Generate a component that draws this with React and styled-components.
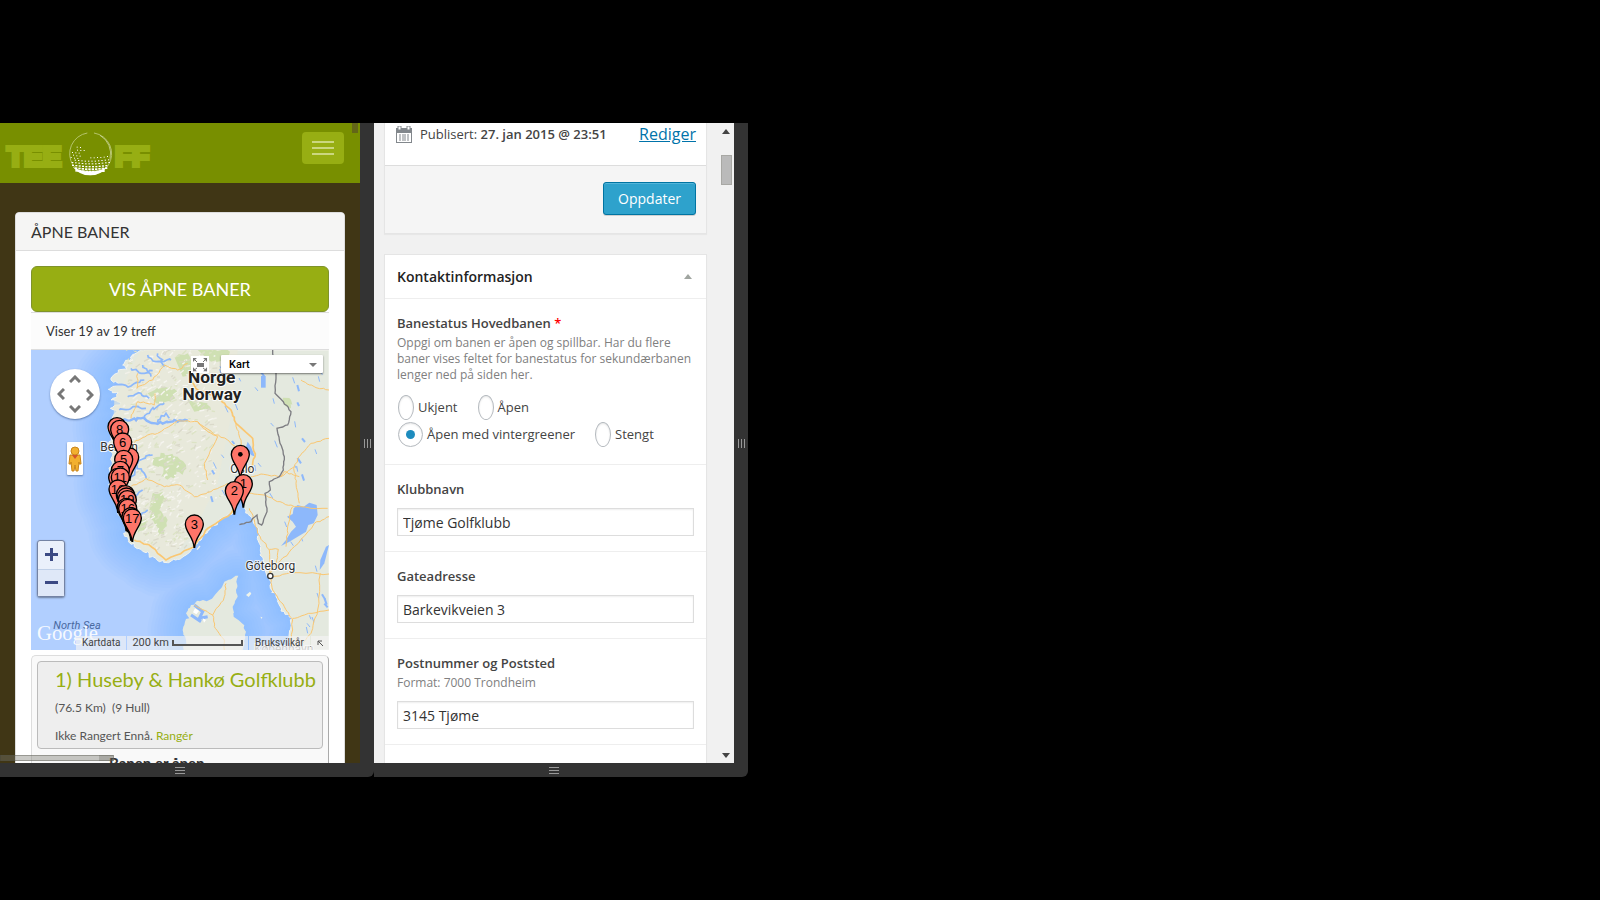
import React from "react";
import styled, { createGlobalStyle, css } from "styled-components";

const GlobalStyle = createGlobalStyle`
  *, *::before, *::after { box-sizing: border-box; }
  body { margin: 0; background: #000; }
  h1, h2, h3, p, fieldset { margin: 0; padding: 0; border: 0; }
  button, input, select { font: inherit; margin: 0; }
`;

const lato = `Lato, "Liberation Sans", sans-serif`;
const openSans = `"Open Sans", "Liberation Sans", sans-serif`;

/* ---------- device frames ---------- */

const Stage = styled.main`
  display: grid;
  grid-template-columns: repeat(2, minmax(320px, 374px));
  align-content: center;
  min-height: 100vh;
`;

const Device = styled.section`
  display: grid;
  grid-template-columns: minmax(0, 1fr) 14px;
  grid-template-rows: 640px 14px;
  background: #333;
  border-bottom-right-radius: 6px;
`;

const Grip = styled.div`
  display: flex;
  align-items: center;
  justify-content: center;
  gap: 2px;
  flex-direction: ${(p) => (p.$rows ? "column" : "row")};
  span {
    background: #999;
    width: ${(p) => (p.$rows ? "10px" : "1px")};
    height: ${(p) => (p.$rows ? "1px" : "9px")};
  }
`;

const DragGrip = ({ rows }) => (
  <Grip $rows={rows}>
    <span />
    <span />
    <span />
  </Grip>
);

/* ---------- golf site ---------- */

const GolfScreen = styled.div`
  position: relative;
  overflow: hidden;
  background: #403615;
  font-family: ${lato};
  color: #333;
`;

const TopBar = styled.header`
  display: flex;
  justify-content: space-between;
  align-items: flex-start;
  height: 60px;
  padding: 9px 16px 0 5px;
  background: #788f00;
`;

const MenuButton = styled.button`
  display: flex;
  flex-direction: column;
  align-items: center;
  justify-content: center;
  gap: 4px;
  width: 42px;
  height: 32px;
  padding: 0;
  border: 0;
  border-radius: 4px;
  background: #97ae13;
  span {
    width: 22px;
    height: 2px;
    background: #cbd77f;
  }
`;

const Card = styled.section`
  margin: 29px 15px 0;
  border: 1px solid #ddd;
  border-radius: 4px;
  background: #fff;
  overflow: hidden;
`;

const CardTitle = styled.h1`
  padding: 9px 15px 8px;
  border-bottom: 1px solid #ddd;
  background: #f5f5f4;
  font-size: 16px;
  font-weight: 400;
  line-height: 20px;
`;

const CardBody = styled.div`
  padding: 15px;
`;

const ShowButton = styled.button`
  display: block;
  width: 100%;
  height: 46px;
  border: 1px solid #7f932b;
  border-radius: 6px;
  background: #97ae13;
  color: #fff;
  font-size: 18px;
`;

const HitCount = styled.p`
  padding: 8px 15px;
  border: solid #ddd;
  border-width: 1px 0;
  background: #fcfcfc;
  font-size: 13px;
  line-height: 20px;
`;

const Results = styled.div`
  margin-top: 5px;
  height: 140px;
  padding: 5px;
  border: 1px solid #ddd;
  border-right: 1px solid #aaa;
  border-radius: 5px;
  background: #f9f9f9;
`;

const Result = styled.article`
  padding: 6px 8px 2px 17px;
  border: 1px solid #bbb;
  border-radius: 4px;
  background: #eee;
  color: #555;
  font-size: 12px;
  a {
    color: #97ae13;
    text-decoration: none;
  }
  h2 {
    font-size: 20px;
    font-weight: 400;
    line-height: 22px;
    white-space: nowrap;
  }
  p {
    line-height: 20px;
    margin-top: 8px;
    white-space: pre;
  }
`;

const ResultStatus = styled.p`
  padding: 5px 0 0 72px;
  font-size: 15px;
  font-weight: 700;
  line-height: 18px;
`;

const PanBar = styled.div`
  position: absolute;
  left: 0;
  bottom: 2px;
  width: 114px;
  height: 6px;
  border: 1px solid rgba(80, 80, 70, 0.4);
  background: linear-gradient(90deg, rgba(120, 120, 110, 0.4) 98px, rgba(90, 90, 80, 0.5) 98px);
`;

const ScrollSpeck = styled.div`
  position: absolute;
  top: 0;
  right: 2px;
  width: 6px;
  height: 10px;
  background: rgba(85, 75, 40, 0.6);
`;

const BALL_ROWS = [
  [42, 26, 40, 3], [51, 22, 50, 3], [60, 12, 34, 3], [68, 10, 40, 3],
  [76, 8, 36, 3], [72, 62, 118, 3], [82, 20, 124, 4], [90, 6, 124, 5],
  [98, 12, 122, 6], [105, 16, 116, 7], [112, 22, 110, 8],
];

const Logo = () => (
  <svg width="150" height="44" viewBox="0 0 150 44" role="img" aria-label="TEE OFF">
    <g
      fill="#97ae13"
      stroke="#97ae13"
      strokeWidth="4"
      fontFamily='"Liberation Sans", sans-serif'
      fontWeight="700"
      fontSize="28"
    >
      <text x="2" y="34">TEE</text>
      <text x="110" y="34">FF</text>
    </g>
    <g transform="translate(63 0) scale(0.3333)">
      <path d="M78 3 A63 63 0 1 1 58 3" fill="none" stroke="#b5c46a" strokeWidth="3" />
      <path d="M96 10 A63 63 0 0 1 126 80" fill="none" stroke="#dbe2b5" strokeWidth="2" />
      {BALL_ROWS.map(([y, from, to, w], r) => {
        const dots = [];
        for (let x = from + (r % 2) * 5; x < to; x += 10) {
          dots.push(
            <rect key={x} x={x} y={y + Math.round(((x - 66) * (x - 66)) / -700) + 4} width={w} height={Math.max(3, w - 2)} fill="#fff" />
          );
        }
        return dots;
      })}
      <path d="M14 104 Q40 119 66 118 Q96 118 118 104 Q98 130 66 130 Q34 130 14 104Z" fill="#fff" />
    </g>
  </svg>
);

/* ---------- map ---------- */

const rng = (seed) => {
  let s = seed;
  return () => {
    s = (s * 16807) % 2147483647;
    return s / 2147483647;
  };
};

const rough = (points, amount, seed) => {
  const rand = rng(seed);
  let out = [];
  for (let i = 0; i < points.length - 1; i++) {
    const [x1, y1] = points[i];
    const [x2, y2] = points[i + 1];
    const n = Math.max(1, Math.min(6, Math.round(Math.hypot(x2 - x1, y2 - y1) / 8)));
    out.push([x1, y1]);
    for (let k = 1; k < n; k++) {
      out.push([
        x1 + ((x2 - x1) * k) / n + (rand() - 0.5) * amount,
        y1 + ((y2 - y1) * k) / n + (rand() - 0.5) * amount,
      ]);
    }
  }
  out.push(points[points.length - 1]);
  return "M" + out.map((p) => p.map((v) => Math.round(v)).join(" ")).join("L");
};

const COAST = [
  [345, 0], [318, 8], [300, 25], [275, 45], [288, 58], [262, 60], [240, 90], [262, 100], [245, 110], [232, 118],
  [262, 128], [258, 142], [240, 150], [270, 158], [238, 175], [258, 185], [245, 200], [235, 215], [230, 240],
  [240, 260], [236, 290], [243, 320], [240, 350], [236, 380], [240, 400], [236, 420], [245, 450],
  [262, 480], [268, 500], [285, 530], [278, 550], [292, 575], [310, 590], [330, 598], [350, 605],
  [355, 622], [375, 625], [385, 635], [410, 638], [440, 628], [465, 615], [490, 592], [510, 570],
  [530, 545], [560, 515], [575, 502], [600, 494], [612, 480], [620, 455], [628, 425], [636, 465],
  [650, 490], [662, 502], [668, 520], [682, 545], [685, 580], [690, 610], [698, 635], [705, 660],
  [716, 690], [718, 715], [735, 740], [745, 765], [760, 785], [783, 805], [780, 830], [775, 860], [770, 900],
];
const DENMARK = [
  [458, 900], [465, 870], [455, 840], [462, 815], [475, 805], [465, 790], [480, 765], [500, 752],
  [535, 750], [560, 725], [580, 695], [600, 688], [622, 677], [615, 720], [620, 740], [605, 770],
  [608, 800], [640, 825], [645, 845], [635, 900],
];
const FJORDS = [
  [[240, 215], [290, 212], [330, 205], [380, 222], [430, 210], [470, 212]],
  [[340, 208], [360, 180], [400, 160]], [[380, 218], [405, 190], [415, 205]],
  [[250, 105], [300, 108], [340, 90]], [[290, 140], [330, 130], [355, 145]],
  [[300, 55], [330, 70], [365, 62]], [[350, 15], [375, 35], [420, 30]],
  [[300, 385], [320, 340], [345, 318], [365, 315]], [[318, 345], [340, 370], [345, 385]],
  [[262, 450], [310, 440], [335, 420]], [[292, 500], [330, 495], [350, 480]],
  [[265, 180], [310, 170], [345, 175]], [[335, 45], [360, 80]], [[380, 10], [400, 50]],
];
const ROADS = [
  [[320, 70], [318, 115], [365, 90], [400, 45], [440, 60], [470, 40]],
  [[300, 205], [320, 155], [370, 165], [372, 130]],
  [[310, 278], [350, 255], [380, 250], [440, 212], [500, 215], [530, 245], [590, 270], [626, 300]],
  [[300, 410], [345, 385], [400, 410], [445, 405], [490, 440], [540, 425], [590, 400]],
  [[480, 90], [500, 120], [560, 140], [600, 180], [615, 220], [665, 265], [672, 320], [655, 370]],
  [[615, 220], [630, 270], [626, 350], [640, 400]],
  [[310, 570], [355, 585], [405, 630], [490, 590], [530, 535], [600, 490], [625, 440]],
  [[660, 380], [690, 372], [750, 380], [790, 350], [800, 325], [840, 280], [894, 265]],
  [[750, 380], [760, 365], [805, 380]], [[790, 350], [795, 400], [805, 460]],
  [[640, 430], [700, 435], [740, 455], [790, 470], [890, 475]],
  [[655, 475], [670, 510], [680, 550], [715, 600], [718, 680], [725, 720], [760, 770], [785, 810], [780, 900]],
  [[715, 598], [742, 598], [735, 640], [718, 670]], [[742, 640], [790, 590], [850, 520], [894, 500]],
  [[720, 680], [790, 668], [894, 672]], [[868, 670], [860, 780], [840, 850], [815, 880]],
  [[785, 805], [820, 795], [894, 780]], [[785, 470], [770, 530], [765, 590]],
  [[585, 700], [580, 740], [545, 795], [550, 830], [580, 870], [580, 900]], [[545, 795], [490, 765]],
  [[500, 215], [560, 260], [520, 340], [530, 390]], [[894, 120], [850, 110], [810, 90]],
];
const FORESTS = [
  [[365, 330], [400, 310], [440, 320], [465, 345], [455, 375], [435, 365], [430, 390], [390, 380], [395, 350], [365, 345]],
  [[365, 430], [395, 425], [405, 450], [385, 480], [410, 510], [400, 550], [380, 560], [370, 520], [355, 480]],
  [[350, 130], [400, 110], [440, 125], [420, 155], [375, 160]],
  [[330, 510], [355, 500], [345, 540], [320, 550]],
  [[430, 20], [470, 10], [490, 60], [455, 80]], [[470, 150], [530, 160], [540, 180], [490, 185]],
  [[755, 145], [780, 150], [780, 175], [760, 165]], [[500, 0], [590, 0], [600, 25], [540, 35]],
];
const BORDER = [
  [725, 0], [735, 65], [732, 130], [757, 155], [780, 185], [770, 225], [738, 235], [745, 270],
  [760, 320], [757, 360], [745, 380], [715, 395], [718, 420], [702, 430], [708, 485], [692, 525],
  [682, 520], [678, 495], [665, 505], [660, 515], [625, 524],
];
const LAKES = [
  "M768 500L785 492L788 475L800 465L818 470L835 458L857 465L860 495L848 520L832 525L825 545L800 560L775 575L750 588L765 570L780 545L795 530L785 515Z",
  "M894 585L880 640L866 660L868 630L885 590Z",
  "M650 275L660 290L672 320L660 315L645 290Z",
];
const PINS = [
  [258, 230, ""], [266, 238, "8"], [296, 321, ""], [275, 276, "6"], [278, 328, "5"], [268, 361, "7"], [260, 382, ""],
  [268, 381, "11"], [261, 417, "18"], [283, 434, ""], [286, 441, ""], [289, 449, "19"], [286, 472, ""],
  [290, 475, "16"], [300, 500, ""], [304, 504, "17"], [628, 313, "•"], [637, 401, "1"],
  [610, 422, "2"], [490, 522, "3"],
];

const speckles = (() => {
  const rand = rng(77);
  const list = [];
  for (let i = 0; i < 520; i++) {
    const y = rand() * 600;
    const x = 270 + Math.max(0, (y - 400) * 0.4) + rand() * (y > 450 ? 150 : 280);
    list.push({
      d: `M${Math.round(x)} ${Math.round(y)}l${Math.round(4 + rand() * 12)} ${Math.round(-12 + rand() * 14)}`,
      c: ["#f2f1ea", "#dad9ca", "#dce3c5", "#f6f5f0"][i % 4],
    });
  }
  return list;
})();

const ponds = (() => {
  const rand = rng(19);
  return Array.from({ length: 62 }, () => {
    const x = 540 + rand() * 345;
    const y = 40 + rand() * 800;
    return [Math.round(x), Math.round(y), Math.round(3 + rand() * 7), Math.round(8 + rand() * 12)];
  }).filter(([x, y]) => (y < 440 || x > 730) && (y < 730 || x > 800));
})();

const coastPath = rough(COAST, 11, 5);
const denmarkPath = rough(DENMARK, 8, 9) + "Z";

const MapFrame = styled.div`
  position: relative;
  height: 300px;
  overflow: hidden;
  background: #b1cfff;
  font-family: Roboto, "Liberation Sans", sans-serif;
  > svg {
    display: block;
    width: 100%;
    height: 100%;
  }
`;

const SHALLOWS = [210, 190, 170, 152, 134, 116, 98, 80, 62, 46, 30, 18];

const Terrain = () => (
  <svg viewBox="0 0 894 900" preserveAspectRatio="xMidYMid slice" role="img" aria-label="Kart over Sør-Norge">
    <rect width="894" height="900" fill="#b1cfff" />
    {SHALLOWS.map((w) => (
      <path
        key={w}
        d={coastPath + denmarkPath}
        fill="none"
        stroke="#85b2fa"
        strokeOpacity="0.07"
        strokeWidth={w}
        strokeLinejoin="round"
      />
    ))}
    <path d={coastPath + "L894 900L894 0Z"} fill="#e4e9df" stroke="#f3f4ef" strokeWidth="3" />
    <path d={denmarkPath} fill="#e4e9df" />
    <path d="M330 0L620 0L600 200L560 400L480 560L400 630L290 560L240 400L250 150Z" fill="#e9ead9" opacity="0.65" />
    {FORESTS.map((f, i) => (
      <path key={i} d={rough(f, 12, i + 3) + "Z"} fill="#cfe0b3" />
    ))}
    {speckles.map((s, i) => (
      <path key={i} d={s.d} stroke={s.c} strokeWidth="4" />
    ))}
    {FJORDS.map((f, i) => (
      <path key={i} d={rough(f, 9, i + 30)} fill="none" stroke="#8db8fb" strokeWidth={i === 0 ? 7 : 5} />
    ))}
    <path d="M490 765L515 785L505 805L530 800M480 795L510 815" fill="none" stroke="#8db8fb" strokeWidth="9" />
    <path d="M492 775l12 8l-8 10l-10-6ZM515 805l10 5l-6 8Z" fill="#fff" />
    <path d="M645 735l12-10l4 6l-8 10ZM688 800l6 2l-2 5Z" fill="#eef3ea" />
    {LAKES.map((d) => (
      <path key={d} d={d} fill="#8db8fb" />
    ))}
    {ponds.map(([x, y, w, h], i) => (
      <path key={i} d={`M${x} ${y}l${w} ${h}`} stroke="#8db8fb" strokeWidth={i % 4 === 0 ? 6 : 3} />
    ))}
    <rect x="690" y="78" width="14" height="35" fill="#8db8fb" />
    {ROADS.map((r, i) => (
      <path key={i} d={rough(r, 5, i + 60)} fill="none" stroke="#fac772" strokeWidth={i === 4 || i === 6 ? 5 : 3} />
    ))}
    <path d={rough(BORDER, 3, 12)} fill="none" stroke="#7d7d82" strokeWidth="4" />
    <g stroke="#fff" strokeOpacity="0.85" strokeWidth="6" paintOrder="stroke" fill="#222" textAnchor="middle" strokeLinejoin="round">
      <text x="542" y="100" fontSize="52" fontWeight="700">Norge</text>
      <text x="543" y="150" fontSize="52" fontWeight="700">Norway</text>
      <g fontSize="36" fill="#333">
        <text x="264" y="304">Bergen</text>
        <text x="634" y="370">Oslo</text>
        <text x="718" y="661">Göteborg</text>
      </g>
      <text x="758" y="908" fontSize="36" fill="#888">København</text>
    </g>
    <text x="67" y="838" fontSize="33" fontStyle="italic" fill="#49699f">North Sea</text>
    <circle cx="718" cy="678" r="8" fill="#fff" stroke="#333" strokeWidth="4" />
    {PINS.map(([x, y, label], i) => (
      <g key={i} transform={`translate(${x} ${y})`}>
        <path
          d="M-1 70C-2 38-27 25-27 0A27 27 0 0 1 27 0C27 25 2 38 1 70Z"
          fill="#fe7569"
          stroke="#000"
          strokeWidth="4"
        />
        {label === "•" ? (
          <circle r="7" />
        ) : (
          <text y="14" textAnchor="middle" fontSize="39" fontFamily='"Liberation Sans", sans-serif'>{label}</text>
        )}
      </g>
    ))}
    <text x="18" y="871" fontSize="62" fontFamily='"Liberation Serif", serif' fill="#fff" fillOpacity="0.9">Google</text>
  </svg>
);

const PanControl = styled.div`
  position: absolute;
  top: 19px;
  left: 19px;
  display: grid;
  grid-template: repeat(3, 15px) / repeat(3, 15px);
  place-content: center;
  width: 50px;
  height: 50px;
  border-radius: 50%;
  background: #fff;
  box-shadow: 0 1px 2px rgba(40, 70, 120, 0.6);
`;

const arrowPlace = {
  up: css`grid-area: 1 / 2;`,
  left: css`grid-area: 2 / 1; rotate: -90deg;`,
  right: css`grid-area: 2 / 3; rotate: 90deg;`,
  down: css`grid-area: 3 / 2; rotate: 180deg;`,
};

const PanArrow = styled.button`
  display: grid;
  place-items: center;
  padding: 0;
  border: 0;
  background: none;
  ${(p) => arrowPlace[p.$dir]}
`;

const Pegman = styled.button`
  position: absolute;
  top: 92px;
  left: 36px;
  display: grid;
  place-items: center;
  width: 16px;
  height: 33px;
  padding: 0;
  border: 0;
  border-radius: 1px;
  background: #fff;
  box-shadow: 0 1px 2px rgba(40, 70, 120, 0.6);
`;

const ZoomControl = styled.div`
  position: absolute;
  top: 190px;
  left: 6px;
  display: grid;
  grid-template-rows: 1fr 1fr;
  width: 28px;
  height: 57px;
  border: 1px solid #7483a4;
  border-radius: 3px;
  background: #eaf0fb;
  box-shadow: 0 1px 2px rgba(0, 0, 0, 0.4);
`;

const ZoomButton = styled.button`
  display: grid;
  place-items: center;
  padding: 0;
  border: 0;
  background: none;
  & + & {
    border-top: 1px solid #c0d0e8;
    background: #dfe8f8;
  }
`;

const ExpandButton = styled.button`
  position: absolute;
  top: 6px;
  left: 160px;
  width: 18px;
  height: 17px;
  padding: 0;
  border: 0;
  background: #fff;
  svg { display: block; }
`;

const MapType = styled.div`
  position: absolute;
  top: 5px;
  left: 190px;
  select {
    display: block;
    width: 102px;
    height: 18px;
    padding: 0 8px;
    border: 0;
    border-radius: 1px;
    background: #fff;
    box-shadow: 0 1px 2px rgba(0, 0, 0, 0.5);
    color: #000;
    font-size: 11px;
    font-weight: 500;
    appearance: none;
  }
  svg {
    position: absolute;
    top: 8px;
    right: 6px;
  }
`;

const MapFooter = styled.div`
  position: absolute;
  right: 0;
  bottom: 0;
  left: 45px;
  display: flex;
  gap: 1px;
  height: 14px;
  color: #444;
  line-height: 14px;
  white-space: nowrap;
`;

const Credit = styled.span`
  display: flex;
  align-items: center;
  gap: 3px;
  flex: ${(p) => (p.$grow ? "1" : "none")};
  padding: 0 ${(p) => (p.$grow ? "5px" : "6px")};
  background: rgba(245, 245, 245, 0.65);
  font-size: ${(p) => (p.$grow ? "11px" : "10px")};
  a {
    color: inherit;
    text-decoration: none;
  }
  svg { flex: none; }
`;

const GolfMap = () => (
  <MapFrame>
    <Terrain />
    <PanControl>
      {[["up", "Flytt opp"], ["left", "Flytt til venstre"], ["right", "Flytt til høyre"], ["down", "Flytt ned"]].map(
        ([dir, name]) => (
          <PanArrow key={dir} $dir={dir} aria-label={name}>
            <svg width="12" height="8" viewBox="0 0 12 8">
              <path d="M1 7L6 2L11 7" fill="none" stroke="#777" strokeWidth="3" />
            </svg>
          </PanArrow>
        )
      )}
    </PanControl>
    <Pegman aria-label="Street View">
      <svg width="14" height="28" viewBox="0 0 14 28">
        <path d="M2 10H12L13 19H11V17L10 26H8L7 20L6 26H4L3 17V19H1Z" fill="#f2b02f" stroke="#c9851b" />
        <circle cx="7" cy="6" r="4" fill="#f2b02f" stroke="#c9851b" />
        <path d="M4 10H10L7 14Z" fill="#d3562c" />
      </svg>
    </Pegman>
    <ZoomControl>
      <ZoomButton aria-label="Zoom inn">
        <svg width="13" height="13"><path d="M5 0h3v5h5v3h-5v5h-3v-5h-5v-3h5z" fill="#3c4a84" /></svg>
      </ZoomButton>
      <ZoomButton aria-label="Zoom ut">
        <svg width="13" height="3"><rect width="13" height="3" fill="#3c4a84" /></svg>
      </ZoomButton>
    </ZoomControl>
    <ExpandButton aria-label="Fullskjerm">
      <svg width="18" height="17" viewBox="0 0 18 17">
        <rect x="6" y="7" width="7" height="4" fill="#777" />
        <path d="M0 0H5L0 5ZM18 0H13L18 5ZM0 17H5L0 12ZM18 17H13L18 12Z" fill="#777" transform="translate(2 2) scale(0.78)" />
        <path d="M2 2L6 6M16 2L12 6M2 15L6 12M16 15L12 12" stroke="#777" strokeWidth="1" />
      </svg>
    </ExpandButton>
    <MapType>
      <select aria-label="Karttype" defaultValue="Kart">
        <option>Kart</option>
        <option>Satellitt</option>
      </select>
      <svg width="8" height="4"><path d="M0 0H8L4 4Z" fill="#777" /></svg>
    </MapType>
    <MapFooter>
      <Credit>Kartdata</Credit>
      <Credit $grow>
        200 km
        <svg width="71" height="7"><path d="M1 0V5H70V0" fill="none" stroke="#555" strokeWidth="2" /></svg>
      </Credit>
      <Credit><a href="#vilkar">Bruksvilkår</a></Credit>
      <Credit>
        <svg width="7" height="7"><path d="M1 5V1H5M1 1L6 6" fill="none" stroke="#555" /></svg>
      </Credit>
    </MapFooter>
  </MapFrame>
);

/* ---------- admin ---------- */

const AdminScreen = styled.div`
  display: grid;
  grid-template-columns: minmax(0, 1fr) 17px;
  grid-template-rows: 100%;
  overflow: hidden;
  background: #f1f1f1;
  color: #444;
  font-family: ${openSans};
  font-size: 13px;
  line-height: 20px;
`;

const AdminContent = styled.div`
  display: flex;
  flex-direction: column;
  gap: 20px;
  min-height: 0;
  padding: 0 10px;
  overflow: hidden;
`;

const Panel = styled.section`
  flex: ${(p) => (p.$fill ? "1 0 auto" : "none")};
  border: 1px solid #e5e5e5;
  border-top-width: ${(p) => (p.$cut ? "0" : "1px")};
  border-bottom-width: ${(p) => (p.$fill ? "0" : "1px")};
  background: #fff;
  box-shadow: 0 1px 1px rgba(0, 0, 0, 0.04);
`;

const PublishRow = styled.div`
  display: flex;
  align-items: center;
  gap: 8px;
  padding: 1px 10px 21px 11px;
  b { font-weight: 600; }
  a {
    margin-left: auto;
    color: #0073aa;
    font-size: 16px;
  }
`;

const PublishFooter = styled.div`
  display: flex;
  justify-content: flex-end;
  padding: 16px 10px 18px;
  border-top: 1px solid #ddd;
  background: #f5f5f5;
`;

const UpdateButton = styled.button`
  height: 33px;
  padding: 0 14px;
  border: 1px solid #0074a2;
  border-radius: 3px;
  background: #2ea2cc;
  box-shadow: inset 0 1px 0 rgba(120, 200, 230, 0.5), 0 1px 0 rgba(0, 0, 0, 0.15);
  color: #fff;
  font-size: 14px;
`;

const PanelTitle = styled.h2`
  display: flex;
  align-items: center;
  justify-content: space-between;
  height: 44px;
  padding: 0 14px 0 12px;
  border-bottom: 1px solid #eee;
  color: #222;
  font-size: 14px;
  font-weight: 600;
`;

const Field = styled.div`
  padding: 14px 12px 15px;
  border-bottom: 1px solid #eee;
`;

const FieldHead = styled.div`
  margin-bottom: 9px;
  label, h3 {
    display: block;
    font-size: 13px;
    font-weight: 600;
    line-height: 20px;
  }
  i {
    color: #f00;
    font-style: normal;
  }
  p {
    padding: 2px 0 1px;
    color: #808080;
    font-size: 12px;
    line-height: 16px;
  }
`;

const TextInput = styled.input`
  display: block;
  width: 100%;
  height: 28px;
  padding: 0 5px;
  border: 1px solid #ddd;
  background: #fff;
  box-shadow: inset 0 1px 2px rgba(0, 0, 0, 0.07);
  color: #333;
  font-size: 14px;
`;

const RadioGrid = styled.div`
  display: flex;
  flex-wrap: wrap;
  gap: 2px 19px;
  padding: 2px 0;
`;

const Radio = styled.label`
  display: flex;
  align-items: center;
  gap: 4px;
  height: 25px;
  padding-left: 1px;
  span { padding-bottom: 1px; }
  input {
    display: grid;
    place-items: center;
    appearance: none;
    width: 16px;
    height: 25px;
    border: 1px solid #b4b9be;
    border-radius: 50%;
    background: #fff;
    box-shadow: inset 0 1px 2px rgba(0, 0, 0, 0.1);
  }
  input:checked { width: 25px; }
  input:checked::before {
    content: "";
    width: 9px;
    height: 9px;
    border-radius: 50%;
    background: #1e8cbe;
  }
`;

const ScrollTrack = styled.div`
  display: flex;
  flex-direction: column;
  align-items: center;
  padding: 6px 0 5px 1px;
`;

const ScrollThumb = styled.div`
  width: 11px;
  height: 30px;
  margin: 21px 0 auto;
  border: 1px solid #a8a8a4;
  background: #bababa;
`;

const CalendarIcon = () => (
  <svg width="16" height="17" viewBox="0 0 16 17" aria-hidden="true">
    <path d="M0 2H16V17H0ZM1 7V16H15V7Z" fill="#82878c" fillRule="evenodd" />
    <path d="M2 0H5V4H2ZM11 0H14V4H11Z" fill="#fff" stroke="#82878c" />
    <path d="M4 8V15M7 8V15M9 8V15M12 8V15" stroke="#82878c" strokeWidth="1" />
  </svg>
);

const Arrow = ({ color, down }) => (
  <svg width="8" height="5" aria-hidden="true">
    <path d={down ? "M0 0H8L4 5Z" : "M0 5H8L4 0Z"} fill={color} />
  </svg>
);

const TextField = ({ id, label, help, value }) => (
  <Field>
    <FieldHead>
      <label htmlFor={id}>{label}</label>
      {help && <p>{help}</p>}
    </FieldHead>
    <TextInput id={id} defaultValue={value} />
  </Field>
);

const statuses = ["Ukjent", "Åpen", "Åpen med vintergreener", "Stengt"];

export default function App() {
  return (
    <>
      <GlobalStyle />
      <Stage>
        <Device>
          <GolfScreen>
            <TopBar>
              <Logo />
              <MenuButton aria-label="Meny">
                <span />
                <span />
                <span />
              </MenuButton>
            </TopBar>
            <Card>
              <CardTitle>ÅPNE BANER</CardTitle>
              <CardBody>
                <ShowButton>VIS ÅPNE BANER</ShowButton>
                <HitCount>Viser 19 av 19 treff</HitCount>
                <GolfMap />
                <Results>
                  <Result>
                    <h2><a href="#huseby">1) Huseby &amp; Hankø Golfklubb</a></h2>
                    <p>{"(76.5 Km)  (9 Hull)"}</p>
                    <p>Ikke Rangert Ennå. <a href="#ranger">Rangér</a></p>
                  </Result>
                  <ResultStatus>Banen er åpen</ResultStatus>
                </Results>
              </CardBody>
            </Card>
            <PanBar />
            <ScrollSpeck />
          </GolfScreen>
          <DragGrip />
          <DragGrip rows />
        </Device>
        <Device>
          <AdminScreen>
            <AdminContent>
              <Panel $cut>
                <PublishRow>
                  <CalendarIcon />
                  <span>Publisert: <b>27. jan 2015 @ 23:51</b></span>
                  <a href="#rediger">Rediger</a>
                </PublishRow>
                <PublishFooter>
                  <UpdateButton>Oppdater</UpdateButton>
                </PublishFooter>
              </Panel>
              <Panel $fill>
                <PanelTitle>
                  Kontaktinformasjon
                  <Arrow color="#a0a5a0" />
                </PanelTitle>
                <Field role="radiogroup" aria-labelledby="banestatus">
                  <FieldHead>
                    <h3 id="banestatus">Banestatus Hovedbanen <i>*</i></h3>
                    <p>
                      Oppgi om banen er åpen og spillbar. Har du flere baner vises feltet for
                      banestatus for sekundærbanen lenger ned på siden her.
                    </p>
                  </FieldHead>
                  <RadioGrid>
                    {statuses.map((s) => (
                      <Radio key={s}>
                        <input type="radio" name="status" defaultChecked={s === statuses[2]} />
                        <span>{s}</span>
                      </Radio>
                    ))}
                  </RadioGrid>
                </Field>
                <TextField id="klubb" label="Klubbnavn" value="Tjøme Golfklubb" />
                <TextField id="gate" label="Gateadresse" value="Barkevikveien 3" />
                <TextField id="post" label="Postnummer og Poststed" help="Format: 7000 Trondheim" value="3145 Tjøme" />
              </Panel>
            </AdminContent>
            <ScrollTrack>
              <Arrow color="#444" />
              <ScrollThumb />
              <Arrow color="#444" down />
            </ScrollTrack>
          </AdminScreen>
          <DragGrip />
          <DragGrip rows />
        </Device>
      </Stage>
    </>
  );
}
